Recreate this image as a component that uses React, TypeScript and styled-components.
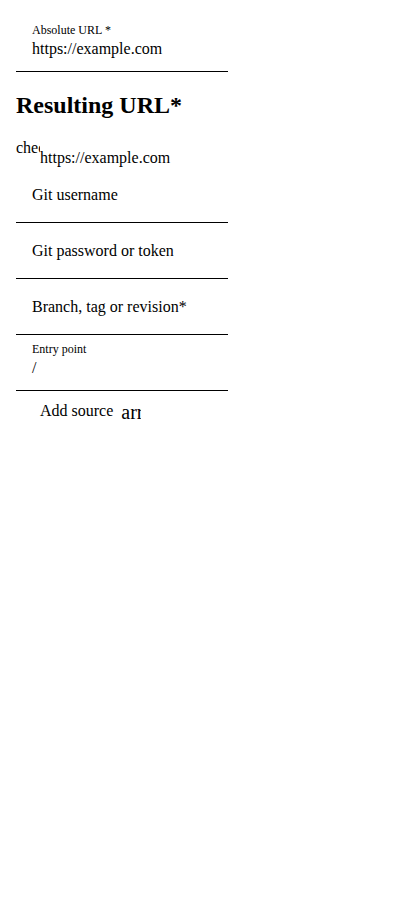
import React from "react";
import styled, { createGlobalStyle } from "styled-components";

const Global = createGlobalStyle`
  html, body { margin: 0; padding: 0; background: #fff; }
  body { font-family: "Liberation Serif", "Times New Roman", serif; color: #000; }
`;

const Page = styled.div`
  padding: 16px;
  width: 212px;
`;

const Field = styled.div<{ $filled?: boolean }>`
  box-sizing: border-box;
  height: 56px;
  border-bottom: 1px solid #000;
  padding: ${(p) => (p.$filled ? "7px 16px 0" : "0 16px")};
  display: flex;
  flex-direction: column;
  justify-content: ${(p) => (p.$filled ? "flex-start" : "center")};
`;

const Label = styled.div`
  font-size: 12px;
  line-height: 14px;
  height: 17px;
`;

const Value = styled.div`
  font-size: 16px;
`;

const Placeholder = styled.div`
  font-size: 16px;
`;

const Heading = styled.h2`
  font-size: 24px;
  font-weight: bold;
  margin: 20px 0;
`;

const ResultRow = styled.div`
  font-size: 16px;
`;

const Icon = styled.span<{ $size: number; $font: number }>`
  display: inline-block;
  width: ${(p) => p.$size}px;
  height: ${(p) => p.$size}px;
  overflow: hidden;
  font-size: ${(p) => p.$font}px;
  white-space: nowrap;
`;

const Button = styled.button`
  display: inline-flex;
  align-items: center;
  margin: 2px 0 0 16px;
  padding: 8px;
  border: none;
  background: none;
  font-family: inherit;
  font-size: 16px;
  color: #000;
`;

const ButtonIcon = styled(Icon)`
  margin-left: 8px;
`;

export default function App() {
  return (
    <>
      <Global />
      <Page>
        <Field $filled>
          <Label>Absolute URL *</Label>
          <Value>https://example.com</Value>
        </Field>
        <Heading>Resulting URL*</Heading>
        <ResultRow>
          <Icon $size={24} $font={16}>check</Icon>
          https://example.com
        </ResultRow>
        <Field>
          <Placeholder>Git username</Placeholder>
        </Field>
        <Field>
          <Placeholder>Git password or token</Placeholder>
        </Field>
        <Field>
          <Placeholder>Branch, tag or revision*</Placeholder>
        </Field>
        <Field $filled>
          <Label>Entry point</Label>
          <Value>/</Value>
        </Field>
        <Button>
          Add source
          <ButtonIcon $size={20} $font={20}>arrow_forward</ButtonIcon>
        </Button>
      </Page>
    </>
  );
}
